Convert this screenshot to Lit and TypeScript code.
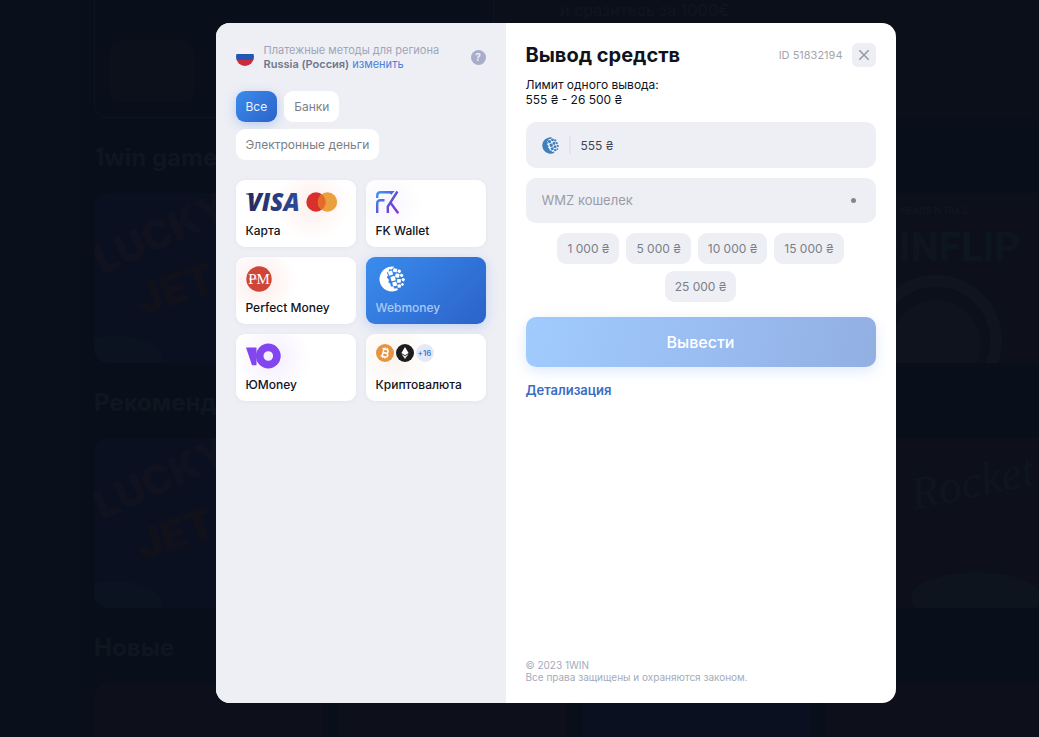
import { LitElement, html, svg, css } from "lit";
import { customElement, state } from "lit/decorators.js";

const webmoneyMark = svg`
  <path d="M15.5.8A12.5 12.5 0 1 0 19 24L18 22 15.6 22.8 14.2 20.6 11.8 20.6 11.4 17.8 9.4 16.4 10 13.8 7.8 11.6 9 9.2 7.8 6.8 9.8 5.4 10.2 3.2 12.8 3.4 14.2 1.8Z" />
  <g>
    <rect x="9.4" y="5" width="4.3" height="4.3" rx=".8" transform="rotate(-18 11.5 7.3)" />
    <rect x="14" y="2.4" width="4" height="3.7" rx=".8" transform="rotate(12 15.8 4.3)" />
    <rect x="18.6" y="3.6" width="3.2" height="3" rx=".7" transform="rotate(28 20 5.1)" />
    <rect x="11.8" y="10.4" width="4.5" height="4.5" rx=".8" transform="rotate(-14 14 12.6)" />
    <rect x="16.3" y="7.6" width="4.1" height="4" rx=".8" transform="rotate(8 18.2 9.6)" />
    <rect x="21.2" y="7.8" width="3" height="3" rx=".7" transform="rotate(28 22.6 9.2)" />
    <rect x="13.6" y="15.9" width="4.2" height="4.1" rx=".8" transform="rotate(-14 15.7 18)" />
    <rect x="18" y="13" width="3.9" height="3.8" rx=".8" />
    <rect x="22.8" y="12.2" width="2.9" height="2.9" rx=".7" transform="rotate(38 24.2 13.6)" />
    <rect x="18.5" y="18.4" width="3.4" height="3.2" rx=".7" transform="rotate(-8 20.2 20)" />
    <rect x="22.2" y="17.2" width="2.5" height="2.5" rx=".6" transform="rotate(35 23.4 18.4)" />
  </g>`;

const cardIcon = html`<svg width="92" height="26" viewBox="0 0 92 26" aria-hidden="true">
  <defs><linearGradient id="visa"><stop stop-color="#252a5e" /><stop offset="1" stop-color="#2b4c9b" /></linearGradient></defs>
  <path d="M0 4.5h6.5l1.5 5Q5 6 0 5.3Z" fill="#252a5e" />
  <text x="1" y="21.5" font-family="Open Sans, sans-serif" font-size="24" font-weight="800" font-style="italic" fill="url(#visa)">VISA</text>
  <circle cx="70" cy="13" r="9.7" fill="#d9302c" /><circle cx="81.5" cy="13" r="9.7" fill="#eba03e" />
  <path d="M75.8 5.2a9.7 9.7 0 0 1 0 15.6a9.7 9.7 0 0 1 0-15.6Z" fill="#e46b2a" />
</svg>`;

const fkIcon = html`<svg width="24" height="26" viewBox="0 0 24 26" fill="none" stroke-width="2.4" aria-hidden="true">
  <defs><linearGradient id="fk" gradientUnits="userSpaceOnUse" x1="0" y1="3" x2="22" y2="24"><stop stop-color="#35a3ee" /><stop offset=".5" stop-color="#5a55dd" /><stop offset="1" stop-color="#8d2bdb" /></linearGradient></defs>
  <g stroke="url(#fk)"><path d="M1.2 9V6.5q0-3.3 3.3-3.3H16l-1.6 1.8" /><path d="M1.2 24V14.5q0-3.3 3.3-3.3H8.5" /><path d="M11.8 24v-6.5l9.6-15M14.2 13.2l8 11" /></g>
</svg>`;

const pmIcon = html`<svg width="26" height="26" viewBox="0 0 26 26" aria-hidden="true">
  <circle cx="13" cy="13" r="12.7" fill="#cf4538" />
  <path d="M3 13h8" stroke="#fff" stroke-width=".7" />
  <text x="13" y="18" text-anchor="middle" font-family="Liberation Serif, serif" font-size="15" fill="#fff">PM</text>
</svg>`;

const wmIcon = html`<svg class="wm" width="26" height="26" viewBox="0 0 26 26" fill="#fff" aria-hidden="true">${webmoneyMark}</svg>`;

const yooIcon = html`<svg width="35" height="26" viewBox="0 0 35 26" fill="#8345f0" aria-hidden="true">
  <path d="M0 4.5h10.5v17.8H6Z" /><path fill-rule="evenodd" d="M22.3.6a12.4 12.4 0 1 1 0 24.8a12.4 12.4 0 0 1 0-24.8Zm0 7.6a4.8 4.8 0 1 0 0 9.6a4.8 4.8 0 0 0 0-9.6Z" />
</svg>`;

const cryptoIcon = html`<span class="coins">
  <svg width="18" height="18" viewBox="0 0 18 18" aria-hidden="true">
    <circle cx="9" cy="9" r="9" fill="#e79340" />
    <g transform="rotate(14 9 9)" fill="none" stroke="#fff" stroke-width="1.5"><path d="M5.5 5.2H9.8a1.8 1.8 0 0 1 0 3.7H7M7 8.9h3.2a1.9 1.9 0 0 1 0 3.9H5.5M7 5.2v7.6" /><path d="M7.9 3.4v2M10.2 3.4v2M7.9 12.6v2M10.2 12.6v2" stroke-width="1.1" /></g>
  </svg>
  <svg width="18" height="18" viewBox="0 0 18 18" aria-hidden="true">
    <circle cx="9" cy="9" r="9" fill="#1c1c1e" />
    <path d="M9 3l3.6 6L9 11.2 5.4 9Z" fill="#fff" /><path d="M5.4 9.9L9 12.1l3.6-2.2L9 15Z" fill="#dcdcdc" />
  </svg>
  <span class="more">+16</span>
</span>`;

const methods = [
  { id: "card", name: "Карта", icon: cardIcon, tint: "glow-red-right" },
  { id: "fk", name: "FK Wallet", icon: fkIcon, tint: "glow-blue" },
  { id: "pm", name: "Perfect Money", icon: pmIcon, tint: "glow-red" },
  { id: "wm", name: "Webmoney", icon: wmIcon, tint: "" },
  { id: "yoo", name: "ЮMoney", icon: yooIcon, tint: "glow-violet" },
  { id: "crypto", name: "Криптовалюта", icon: cryptoIcon, tint: "glow-orange" },
];
const categories = ["Все", "Банки", "Электронные деньги"];
const amounts = ["1 000 ₴", "5 000 ₴", "10 000 ₴", "15 000 ₴", "25 000 ₴"];

@customElement("casino-lobby")
export class CasinoLobby extends LitElement {
  static styles = css`
    :host { display: flex; height: 100%; overflow: hidden; background: #080f1b; color: #0f1620; font-family: Inter, sans-serif; }
    .rail { flex: none; box-sizing: border-box; width: 79px; border-right: 1px solid #0a111d; background: #09101b; }
    .main { flex: 1; min-width: 0; padding-left: 15px; }
    .hero { display: grid; grid-template-columns: 400px 1fr; height: 118px; }
    .promo { box-sizing: border-box; height: 118px; padding: 40px 14px 14px; border: 1px solid #0e1520; border-top: 0; border-radius: 0 0 12px 12px; }
    .thumb { width: 86px; height: 62px; border-radius: 12px; background: #0c101a; }
    .slogan { padding-left: 66px; font-size: 16px; line-height: 20px; font-weight: 500; background: #0a0f1a; color: #10151f; }
    h2 { margin: 0; font-size: 24px; line-height: 30px; font-weight: 700; }
    .first { margin-top: 25px; }
    .row { display: grid; grid-template-columns: repeat(4, 229px); gap: 15px; margin: 20px 0 25px; }
    .tile { height: 170px; border-radius: 14px; overflow: hidden; background: #0a1020; }
    .tile.warm { background: #0d101b; }
    .tile svg { display: block; width: 229px; height: 170px; }
  `;
  private lucky() {
    return html`<div class="tile"><svg viewBox="0 0 229 170" font-family="Inter, sans-serif" font-weight="900">
      <ellipse cx="20" cy="165" rx="48" ry="22" fill="#0c1320" />
      <text x="8" y="82" transform="rotate(-24 8 82)" font-size="40" fill="#10121f">LUCKY</text>
      <text x="48" y="122" transform="rotate(-18 48 122)" font-size="42" fill="#10111b">JET</text>
    </svg></div>`;
  }
  render() {
    return html`<div class="rail"></div>
      <div class="main">
        <div class="hero"><div class="promo"><div class="thumb"></div></div><div class="slogan">и сразитесь за 1000€</div></div>
        <h2 class="first">1win games</h2>
        <div class="row">${this.lucky()}<div class="tile"></div><div class="tile"></div>
          <div class="tile warm"><svg viewBox="0 0 229 170">
            <text x="194" y="68" text-anchor="end" font-family="Roboto, sans-serif" font-size="40" font-weight="700" fill="#0d1520">COINFLIP</text>
            <text x="75" y="21" font-family="Inter, sans-serif" font-size="9" fill="#111822">HEADS N TAILS</text>
            <circle cx="110" cy="148" r="60" fill="none" stroke="#0f141f" stroke-width="12" /><circle cx="110" cy="152" r="45" fill="#0f131e" />
          </svg></div></div>
        <h2>Рекомендуем</h2>
        <div class="row">${this.lucky()}<div class="tile"></div><div class="tile"></div>
          <div class="tile warm"><svg viewBox="0 0 229 170">
            <text x="88" y="72" transform="rotate(-12 88 72)" font-family="Liberation Serif, serif" font-style="italic" font-size="46" fill="#0f151f">Rocket</text>
            <ellipse cx="150" cy="160" rx="65" ry="26" fill="#0d141e" />
          </svg></div></div>
        <h2>Новые</h2>
        <div class="row"><div class="tile warm"></div><div class="tile warm"></div><div class="tile"></div><div class="tile warm"></div></div>
      </div>`;
  }
}

@customElement("app-root")
export class AppRoot extends LitElement {
  static styles = css`
    :host { display: block; position: relative; height: 100vh; overflow: hidden; font-family: Inter, sans-serif; font-size: 12px; line-height: 15px; color: #10131d; }
    button, input { font: inherit; color: inherit; border: 0; margin: 0; padding: 0; background: none; }
    button { cursor: pointer; }
    a { text-decoration: none; }
    svg { display: block; }
    .overlay { position: absolute; inset: 0; box-sizing: border-box; display: flex; align-items: center; justify-content: center; padding: 23px 0 34px 72px; }
    .modal { display: grid; grid-template-columns: 290px 1fr; width: 680px; max-width: 100%; min-height: 100%; max-height: 100%; border-radius: 14px; overflow: hidden; background: #fff; }
    .methods { padding: 20px; background: #eeeff5; }
    .region { display: flex; align-items: center; gap: 10px; margin-bottom: 20px; font-size: 11px; line-height: 14px; color: #a0a5b8; }
    .region p { flex: 1; margin: 0; }
    .region strong { font-weight: 600; color: #71778f; }
    .region a { color: #4a80d8; }
    .help { width: 15px; height: 15px; border-radius: 50%; background: #a7aecb; color: #eeeff5; font-size: 10px; line-height: 15px; font-weight: 700; }
    .chips { display: flex; flex-wrap: wrap; gap: 7px; }
    .chip { height: 31px; padding: 0 10px; border-radius: 9px; background: #fff; color: #7b7e86; }
    .chip.active { background: linear-gradient(135deg, #3b8bee, #2c63c8); color: #e9f1ff; box-shadow: 0 3px 12px #3b7de04d; }
    .grid { display: grid; grid-template-columns: 1fr 1fr; gap: 10px; margin-top: 20px; }
    .card { display: flex; flex-direction: column; align-items: flex-start; justify-content: space-between; height: 67px; padding: 9px 10px; border-radius: 9px; background: #fff; box-shadow: 0 1px 4px #b9c1d833; font-weight: 500; text-align: left; }
    .card.active { background: linear-gradient(135deg, #3a8cee, #2b62c9); color: #a9c8f6; box-shadow: 0 3px 12px #3b7de040; }
    .glow-red-right { background: radial-gradient(circle at 76px 24px, #fdefec, #fff0 38px), #fff; }
    .glow-blue { background: radial-gradient(circle at 22px 24px, #f7f6fe, #fff0 34px), #fff; }
    .glow-red { background: radial-gradient(circle at 24px 24px, #fcebe9, #fff0 36px), #fff; }
    .glow-violet { background: radial-gradient(circle at 36px 24px, #f4eefe, #fff0 38px), #fff; }
    .glow-orange { background: radial-gradient(circle at 28px 24px, #faf4ef, #fff0 38px), #fff; }
    .wm { margin-left: 3px; }
    .coins { display: flex; gap: 2px; padding-top: 1px; }
    .more { width: 18px; height: 18px; border-radius: 50%; background: #e4eaf5; color: #4080de; font-size: 8px; line-height: 18px; font-weight: 600; text-align: center; }
    .form { display: flex; flex-direction: column; padding: 20px; }
    .head { display: flex; align-items: center; gap: 9px; }
    h1 { flex: 1; margin: 0; font-size: 20px; line-height: 24px; font-weight: 700; }
    .uid { font-size: 11px; color: #a3a5ad; }
    .close { display: grid; place-items: center; width: 24px; height: 24px; border-radius: 6px; background: #eeeff5; color: #9497a5; }
    .limit { margin: 10px 0 15px; }
    .field { display: flex; align-items: center; box-sizing: border-box; height: 46px; padding: 0 16px; border-radius: 10px; background: #eeeff5; }
    .field input { flex: 1; min-width: 0; outline: 0; color: #42444f; }
    .amount { border-left: 2px solid #e3e4ec; height: 18px; margin-left: 10px; padding-left: 10px; }
    .wallet { height: 45px; margin-top: 10px; font-size: 13px; }
    .wallet input::placeholder { color: #9a9ca5; opacity: 1; }
    .dot { width: 5px; height: 5px; margin-right: 4px; border-radius: 50%; background: #84868c; }
    .presets { justify-content: center; margin: 10px 0 15px; }
    .presets .chip { background: #eeeff5; }
    .submit { height: 50px; border-radius: 10px; background: linear-gradient(100deg, #a0cbfd, #9abdf2 50%, #92afe2); color: #fff; font-size: 16px; font-weight: 500; box-shadow: 0 4px 14px #5a90ec33; }
    .details { align-self: flex-start; margin-top: 16px; color: #3b6cc4; font-size: 13px; font-weight: 600; }
    footer { margin-top: auto; font-size: 10px; line-height: 12px; color: #a5abba; }
  `;

  @state() private category = "Все";
  @state() private method = "wm";
  @state() private amount = "555 ₴";

  render() {
    return html`
      <casino-lobby aria-hidden="true"></casino-lobby>
      <div class="overlay">
        <div class="modal" role="dialog" aria-modal="true" aria-labelledby="title">
          <section class="methods">
            <div class="region">
              <svg width="18" height="18" viewBox="0 0 18 18" aria-hidden="true">
                <defs><clipPath id="round"><circle cx="9" cy="9" r="9" /></clipPath></defs>
                <g clip-path="url(#round)"><path d="M0 0h18v6H0Z" fill="#f1f1f6" /><path d="M0 6h18v6H0Z" fill="#2456b4" /><path d="M0 12h18v6H0Z" fill="#cb2c3b" /></g>
              </svg>
              <p>Платежные методы для региона<br /><strong>Russia (Россия)</strong> <a href="#region">изменить</a></p>
              <button class="help" aria-label="Помощь">?</button>
            </div>
            <div class="chips">
              ${categories.map((c) => html`<button class="chip ${c === this.category ? "active" : ""}" @click=${() => (this.category = c)}>${c}</button>`)}
            </div>
            <div class="grid">
              ${methods.map((m) => html`<button class="card ${m.id === this.method ? "active" : m.tint}" @click=${() => (this.method = m.id)}>${m.icon}<span>${m.name}</span></button>`)}
            </div>
          </section>
          <section class="form">
            <div class="head">
              <h1 id="title">Вывод средств</h1>
              <span class="uid">ID 51832194</span>
              <button class="close" aria-label="Закрыть"><svg width="12" height="12" viewBox="0 0 12 12" fill="none" stroke="currentColor" stroke-width="1.5"><path d="M1.3 1.3l9.4 9.4M10.7 1.3L1.3 10.7" /></svg></button>
            </div>
            <p class="limit">Лимит одного вывода:<br />555 ₴ - 26 500 ₴</p>
            <label class="field">
              <svg width="17" height="17" viewBox="0 0 26 26" fill="#3f7fba" aria-hidden="true">${webmoneyMark}</svg>
              <input class="amount" aria-label="Сумма" .value=${this.amount} />
            </label>
            <label class="field wallet"><input aria-label="WMZ кошелек" placeholder="WMZ кошелек" /><span class="dot"></span></label>
            <div class="chips presets">
              ${amounts.map((a) => html`<button class="chip" @click=${() => (this.amount = a)}>${a}</button>`)}
            </div>
            <button class="submit">Вывести</button>
            <a class="details" href="#details">Детализация</a>
            <footer>© 2023 1WIN<br />Все права защищены и охраняются законом.</footer>
          </section>
        </div>
      </div>`;
  }
}
